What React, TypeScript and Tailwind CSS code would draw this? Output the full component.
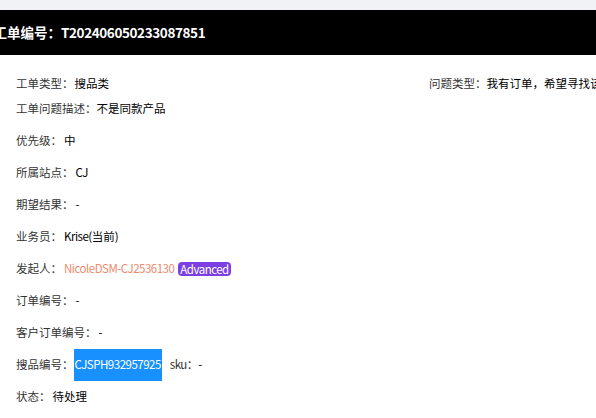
import React from 'react';

const Row = ({ label, children, className = 'h-8' }: { label: string; children?: React.ReactNode; className?: string }) => (
  <div className={`flex items-center whitespace-nowrap ${className}`}>
    <span className="text-[#333]">{label}：</span>
    {children}
  </div>
);

// latin runs in the reference are tighter than the CJK fallback gives
const Latin = ({ children, className = '' }: { children: React.ReactNode; className?: string }) => (
  <span className={`tracking-[-0.5px] ${className}`}>{children}</span>
);

const TicketDetail = () => {
  return (
    <div className="w-[596px] h-[418px] overflow-hidden bg-white text-[11.5px] text-black font-['Noto_Sans_CJK_SC',sans-serif]">
      <div className="h-[10px] bg-[#f0f2f5]" />
      <div className="h-[45px] bg-black flex items-center">
        <h1 className="-ml-[6.5px] text-[13.5px] font-bold text-white whitespace-nowrap">
          工单编号：<span className="tracking-[-0.4px]">T202406050233087851</span>
        </h1>
      </div>

      <div className="pl-4 pt-[17px]">
        <div className="grid grid-cols-[413px_400px] h-6 items-center whitespace-nowrap">
          <Row label="工单类型" className="h-6">
            <span className="ml-px">搜品类</span>
          </Row>
          <Row label="问题类型" className="h-6">
            <span>我有订单，希望寻找该商品的其他供应商</span>
          </Row>
        </div>
        <Row label="工单问题描述" className="h-6 mt-px">
          <span>不是同款产品</span>
        </Row>
        <div className="mt-1">
          <Row label="优先级">
            <span className="ml-0.5">中</span>
          </Row>
          <Row label="所属站点">
            <Latin className="ml-0.5">CJ</Latin>
          </Row>
          <Row label="期望结果">
            <span className="ml-0.5">-</span>
          </Row>
          <Row label="业务员">
            <Latin className="ml-0.5">Krise(</Latin>
            <span>当前</span>
            <span>)</span>
          </Row>
          <Row label="发起人">
            <Latin className="ml-0.5 text-[#f08a6c]">NicoleDSM-CJ2536130</Latin>
            <Latin className="ml-1 px-0.5 leading-[14px] rounded-sm bg-[#7b3fe4] text-white">Advanced</Latin>
          </Row>
          <Row label="订单编号">
            <span className="ml-0.5">-</span>
          </Row>
          <Row label="客户订单编号">
            <span className="ml-0.5">-</span>
          </Row>
          <Row label="搜品编号">
            <Latin className="h-8 flex items-center px-px bg-[#1890ff] text-white">CJSPH932957925</Latin>
            <Latin className="ml-2 text-[#333]">sku</Latin>
            <span className="text-[#333]">：</span>
            <span>-</span>
          </Row>
          <Row label="状态">
            <span className="ml-0.5">待处理</span>
          </Row>
        </div>
      </div>
    </div>
  );
};

export default function App() {
  return <TicketDetail />;
}
